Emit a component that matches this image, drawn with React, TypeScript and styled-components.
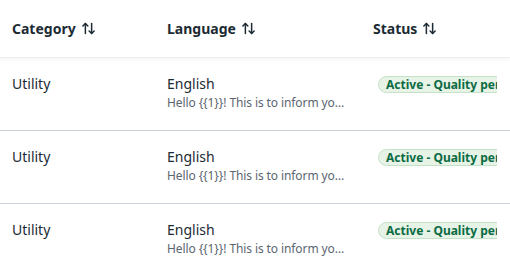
import { FC } from "react";
import styled, { createGlobalStyle } from "styled-components";
import { ArrowUpDown } from "lucide-react";

const GlobalStyle = createGlobalStyle`
  body {
    margin: 0;
    background: #fff;
    font-family: "Noto Sans", "Open Sans", sans-serif;
    color: #1c2b33;
  }
`;

const Table = styled.div`
  width: 510px;
  overflow: hidden;
`;

const Row = styled.div<{ $head?: boolean }>`
  display: grid;
  grid-template-columns: 155px 206px 136px;
  height: ${(p) => (p.$head ? "57px" : "72px")};
  border-bottom: 1px solid ${(p) => (p.$head ? "#eceef0" : "#cbd2d9")};
  box-shadow: ${(p) => (p.$head ? "0 2px 3px rgba(0,0,0,0.04)" : "none")};
  &:last-child {
    border-bottom: none;
  }
`;

const HeadCell = styled.div`
  display: flex;
  align-items: center;
  gap: 5px;
  padding: 0 12px;
  font-size: 14px;
  font-weight: 700;
  color: #1c2b33;
  white-space: nowrap;
`;

const Cell = styled.div`
  padding: 16px 0 0 12px;
  font-size: 14px;
  line-height: 20px;
  min-width: 0;
  overflow: hidden;
`;

const Sub = styled.div`
  font-size: 12px;
  line-height: 17px;
  color: #5b6670;
  white-space: nowrap;
  overflow: hidden;
  text-overflow: ellipsis;
  width: 180px;
  letter-spacing: -0.1px;
`;

const Badge = styled.span`
  display: inline-block;
  margin-left: 5px;
  padding: 0 7px;
  height: 17px;
  line-height: 15px;
  border-radius: 9px;
  background: #e7f3e6;
  border: 1px solid #c6e2c6;
  color: #0b6b44;
  font-size: 12px;
  font-weight: 700;
  white-space: nowrap;
  box-sizing: border-box;
`;

const rows = [1, 2, 3];

const App: FC = () => {
  return (
    <>
      <GlobalStyle />
      <Table>
        <Row $head>
          <HeadCell>
            Category <ArrowUpDown size={15} strokeWidth={2.4} />
          </HeadCell>
          <HeadCell>
            Language <ArrowUpDown size={15} strokeWidth={2.4} />
          </HeadCell>
          <HeadCell>
            Status <ArrowUpDown size={15} strokeWidth={2.4} />
          </HeadCell>
        </Row>
        {rows.map((r) => (
          <Row key={r}>
            <Cell>Utility</Cell>
            <Cell>
              English
              <Sub>Hello {"{{1}}"}! This is to inform you about your order</Sub>
            </Cell>
            <Cell>
              <Badge>Active - Quality pending</Badge>
            </Cell>
          </Row>
        ))}
      </Table>
    </>
  );
};

export default App;
